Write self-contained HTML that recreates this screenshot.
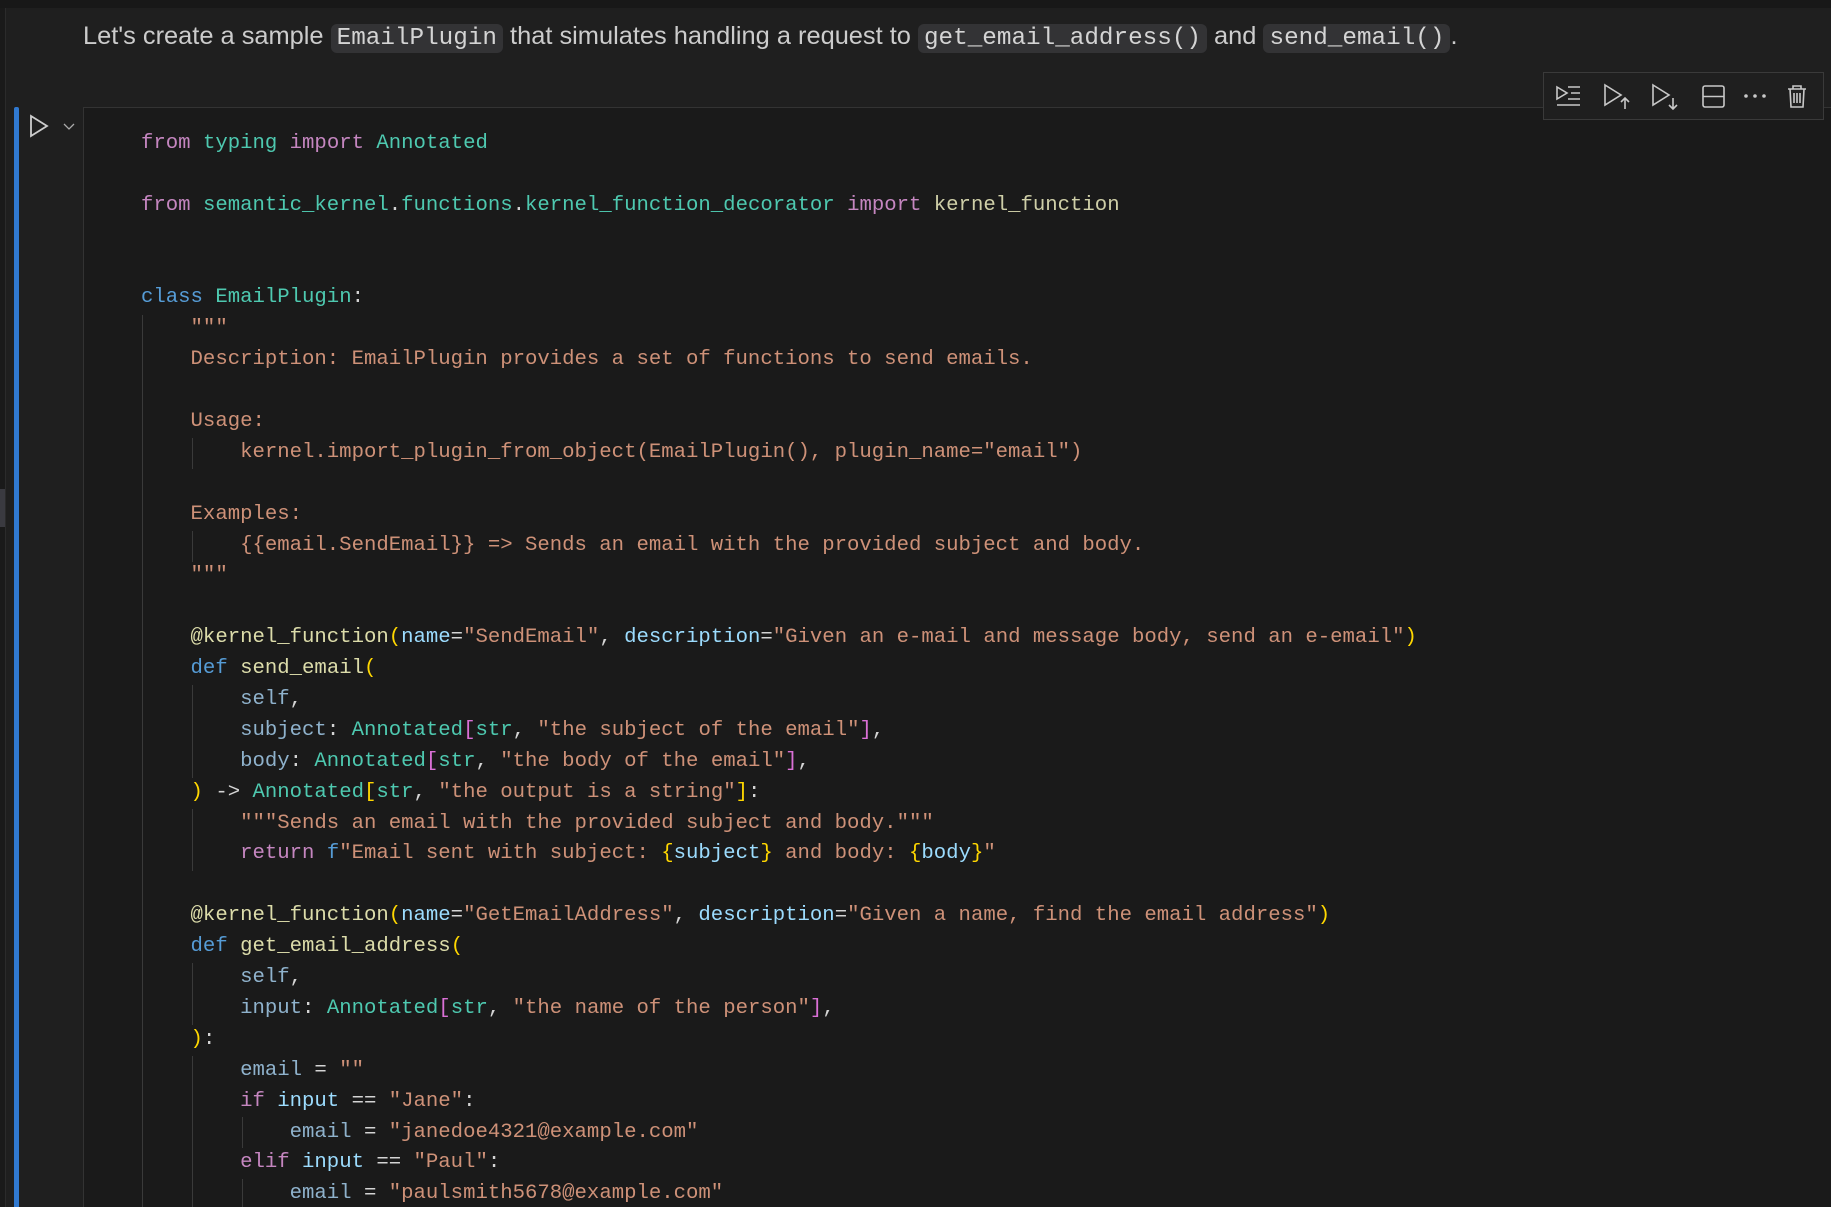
<!DOCTYPE html>
<html><head><meta charset="utf-8"><style>
html,body{margin:0;width:1831px;height:1207px;overflow:hidden}
body{background:#1f1f1f;position:relative;font-family:"Liberation Sans",sans-serif}
.abs{position:absolute}
.md{left:83px;top:17px;font-size:25.4px;color:#cccccc;line-height:38px;white-space:nowrap}
.md code{font-family:"Liberation Mono",monospace;background:#333335;border-radius:6px;padding:1px 6px;font-size:24.3px;color:#d4d4d4}
#code{left:141px;top:129px;font-family:"Liberation Mono",monospace;font-size:20.65px;color:#d4d4d4}
#code div{height:30.9px;line-height:30.9px;white-space:pre}
.k{color:#c586c0}.t{color:#4ec9b0}.b{color:#569cd6}.f{color:#dcdcaa}.s{color:#ce9178}.p{color:#9cdcfe}.v{color:#8fb2cc}.y{color:#ffd700}.m{color:#da70d6}.w{color:#d4d4d4}
.g{position:absolute;width:1px;background:#3a3a3a}
</style></head><body>
<div class="abs" style="left:0;top:0;width:1831px;height:8px;background:#181818"></div>
<div class="abs" style="left:0;top:8px;width:5px;height:1199px;background:#1a1a1a"></div>
<div class="abs" style="left:5px;top:8px;width:1px;height:1199px;background:#2b2b2b"></div>
<div class="abs" style="left:0;top:489px;width:5px;height:38px;background:#3a3a40"></div>
<div class="abs md">Let's create a sample <code>EmailPlugin</code> that simulates handling a request to <code>get_email_address()</code> and <code>send_email()</code>.</div>
<div class="abs" style="left:14px;top:107px;width:5px;height:1100px;background:#3079d0;border-radius:2px 2px 0 0"></div>
<div class="abs" style="left:83px;top:107px;width:1748px;height:1100px;background:#1a1a1a;border-left:1px solid #333;border-top:1px solid #333"></div>
<svg class="abs" style="left:28px;top:113px" width="60" height="28"><path d="M3 3 L19 13 L3 23 Z" fill="none" stroke="#cccccc" stroke-width="1.8"/><path d="M36 11 L41 16 L46 11" fill="none" stroke="#aaa" stroke-width="1.3"/></svg>
<div class="abs" style="left:1543px;top:72px;width:279px;height:46px;background:#1f1f1f;border:1px solid #3a3a3a"></div>
<svg class="abs" style="left:1543px;top:72px" width="280" height="48" fill="none" stroke="#c8c8c8" stroke-width="1.6">
<path d="M14 15 L24 21 L14 27 Z M25 15 H37 M28 21 H37 M25 27 H37 M14 33 H37"/>
<path d="M62 13 L78 23 L62 33 Z M82 37 V26 M78 30 L82 26 L86 30"/>
<path d="M110 13 L126 23 L110 33 Z M130 26 V37 M126 33 L130 37 L134 33"/>
<rect x="160" y="14" width="21" height="21" rx="2"/><path d="M160 24.5 H181"/>
<circle cx="203" cy="24" r="1" fill="#c8c8c8"/><circle cx="212" cy="24" r="1" fill="#c8c8c8"/><circle cx="221" cy="24" r="1" fill="#c8c8c8"/>
<path d="M245 17 H263 M250 17 V14 H258 V17 M247 17 L248 35 H260 L261 17 M251 21 V31 M254 21 V31 M257 21 V31"/>
</svg>
<div class="g" style="left:142px;top:315px;height:892px"></div>
<div class="g" style="left:192px;top:438px;height:31px"></div>
<div class="g" style="left:192px;top:531px;height:31px"></div>
<div class="g" style="left:192px;top:685px;height:93px"></div>
<div class="g" style="left:192px;top:809px;height:62px"></div>
<div class="g" style="left:192px;top:963px;height:62px"></div>
<div class="g" style="left:192px;top:1056px;height:151px"></div>
<div class="g" style="left:242px;top:1117px;height:31px"></div>
<div class="g" style="left:242px;top:1179px;height:28px"></div>
<div id="code" class="abs"><div><span class="k">from</span> <span class="t">typing</span> <span class="k">import</span> <span class="t">Annotated</span></div><div> </div><div><span class="k">from</span> <span class="t">semantic_kernel</span>.<span class="t">functions</span>.<span class="t">kernel_function_decorator</span> <span class="k">import</span> <span class="f" style="color:#cfcfa8">kernel_function</span></div><div> </div><div> </div><div><span class="b">class</span> <span class="t">EmailPlugin</span>:</div><div class="s">    """</div><div class="s">    Description: EmailPlugin provides a set of functions to send emails.</div><div> </div><div class="s">    Usage:</div><div class="s">        kernel.import_plugin_from_object(EmailPlugin(), plugin_name="email")</div><div> </div><div class="s">    Examples:</div><div class="s">        {{email.SendEmail}} =&gt; Sends an email with the provided subject and body.</div><div class="s">    """</div><div> </div><div>    <span class="f">@kernel_function</span><span class="y">(</span><span class="p">name</span>=<span class="s">"SendEmail"</span>, <span class="p">description</span>=<span class="s">"Given an e-mail and message body, send an e-email"</span><span class="y">)</span></div><div>    <span class="b">def</span> <span class="f">send_email</span><span class="y">(</span></div><div>        <span class="v">self</span>,</div><div>        <span class="v">subject</span>: <span class="t">Annotated</span><span class="m">[</span><span class="t">str</span>, <span class="s">"the subject of the email"</span><span class="m">]</span>,</div><div>        <span class="v">body</span>: <span class="t">Annotated</span><span class="m">[</span><span class="t">str</span>, <span class="s">"the body of the email"</span><span class="m">]</span>,</div><div>    <span class="y">)</span> -&gt; <span class="t">Annotated</span><span class="y">[</span><span class="t">str</span>, <span class="s">"the output is a string"</span><span class="y">]</span>:</div><div class="s">        """Sends an email with the provided subject and body."""</div><div>        <span class="k">return</span> <span class="b">f</span><span class="s">"Email sent with subject: </span><span class="y">{</span><span class="p">subject</span><span class="y">}</span><span class="s"> and body: </span><span class="y">{</span><span class="p">body</span><span class="y">}</span><span class="s">"</span></div><div> </div><div>    <span class="f">@kernel_function</span><span class="y">(</span><span class="p">name</span>=<span class="s">"GetEmailAddress"</span>, <span class="p">description</span>=<span class="s">"Given a name, find the email address"</span><span class="y">)</span></div><div>    <span class="b">def</span> <span class="f">get_email_address</span><span class="y">(</span></div><div>        <span class="v">self</span>,</div><div>        <span class="v">input</span>: <span class="t">Annotated</span><span class="m">[</span><span class="t">str</span>, <span class="s">"the name of the person"</span><span class="m">]</span>,</div><div>    <span class="y">)</span>:</div><div>        <span class="v">email</span> = <span class="s">""</span></div><div>        <span class="k">if</span> <span class="p">input</span> == <span class="s">"Jane"</span>:</div><div>            <span class="v">email</span> = <span class="s">"janedoe4321@example.com"</span></div><div>        <span class="k">elif</span> <span class="p">input</span> == <span class="s">"Paul"</span>:</div><div>            <span class="v">email</span> = <span class="s">"paulsmith5678@example.com"</span></div></div>
</body></html>
